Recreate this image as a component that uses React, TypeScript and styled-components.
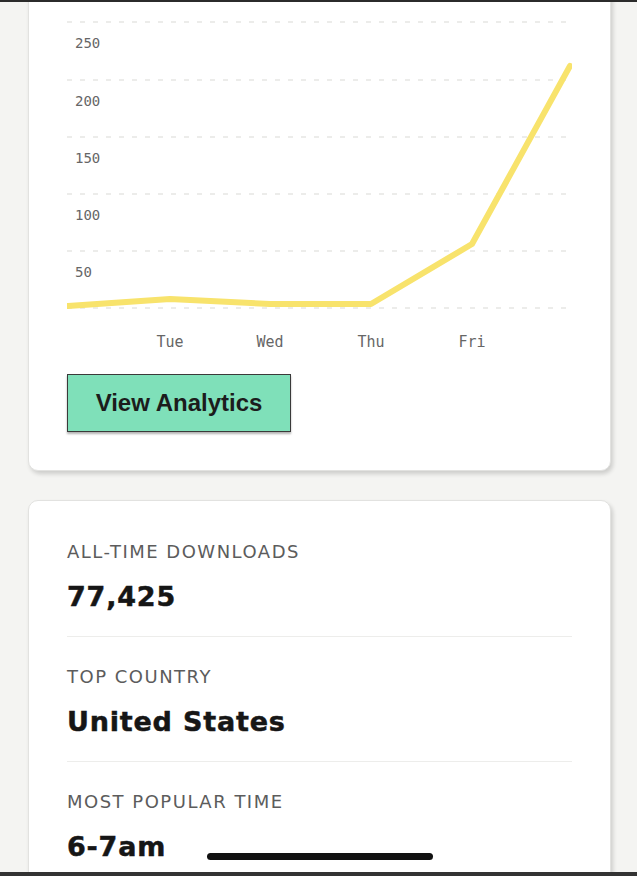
import React from "react"
import styled, { createGlobalStyle } from "styled-components"

const GlobalStyle = createGlobalStyle`
  html, body {
    margin: 0;
    padding: 0;
    background: #f4f4f2;
  }
  * {
    box-sizing: border-box;
  }
`

const Screen = styled.div`
  position: relative;
  width: 637px;
  height: 876px;
  overflow: hidden;
  background: #f4f4f2;
  border-top: 2px solid #2b2b2b;
  border-bottom: 4px solid #333;
  font-family: "Liberation Sans", Arial, sans-serif;
`

const Content = styled.div`
  display: flex;
  flex-direction: column;
  gap: 29px;
  padding: 0 26px 0 28px;
  margin-top: -22px;
`

const Card = styled.section<{ $pad: string }>`
  background: #fff;
  border: 1px solid #e2e2e0;
  border-radius: 10px;
  box-shadow: 2px 3px 4px rgba(0, 0, 0, 0.16);
  padding: ${({ $pad }) => $pad};
`

const ChartSvg = styled.svg`
  display: block;
  width: 505px;
  height: 356px;
`

const Button = styled.button`
  margin-top: 18px;
  width: 224px;
  height: 58px;
  background: #7fe0b9;
  border: 1px solid #3a3a3a;
  box-shadow: 0 2px 2px rgba(0, 0, 0, 0.3);
  color: #1c1c1c;
  font-family: "Liberation Sans", Arial, sans-serif;
  font-weight: 700;
  font-size: 24px;
  cursor: pointer;
`

const Stat = styled.div`
  padding: 29px 0 23px;
  border-bottom: 1px solid #ededeb;

  &:last-child {
    border-bottom: none;
  }
`

const StatLabel = styled.div`
  font-family: "DejaVu Sans", sans-serif;
  font-size: 18px;
  line-height: 22px;
  letter-spacing: 1.5px;
  color: #5c5c5c;
  text-transform: uppercase;
`

const StatValue = styled.div`
  margin-top: 18px;
  font-family: "DejaVu Sans", sans-serif;
  font-weight: 700;
  font-size: 27px;
  line-height: 32px;
  letter-spacing: 0.8px;
  color: #161616;
  -webkit-text-stroke: 0.5px #161616;
`

const HomeIndicator = styled.div`
  position: absolute;
  left: 207px;
  top: 851px;
  width: 226px;
  height: 7px;
  border-radius: 4px;
  background: #111;
`

const gridY = [22, 80, 137, 194, 251, 308]
const yLabels = ["250", "200", "150", "100", "50"]
const days = [
  { label: "Tue", x: 103 },
  { label: "Wed", x: 203 },
  { label: "Thu", x: 304 },
  { label: "Fri", x: 405 },
]
const points = [
  [1, 306],
  [103, 299],
  [203, 304],
  [304, 304],
  [405, 244],
  [503, 66],
]

function Chart() {
  return (
    <ChartSvg viewBox="0 0 505 356">
      {gridY.map((y) => (
        <line
          key={y}
          x1={0}
          x2={505}
          y1={y}
          y2={y}
          stroke="#e6e6e4"
          strokeWidth={1.5}
          strokeDasharray="5 8"
        />
      ))}
      {yLabels.map((l, i) => (
        <text
          key={l}
          x={8}
          y={gridY[i] + 26}
          fontFamily="'DejaVu Sans Mono', monospace"
          fontSize={14}
          fill="#666"
        >
          {l}
        </text>
      ))}
      <polyline
        points={points.map((p) => p.join(",")).join(" ")}
        fill="none"
        stroke="#f8e36c"
        strokeWidth={6}
        strokeLinecap="round"
        strokeLinejoin="round"
      />
      {days.map((d) => (
        <text
          key={d.label}
          x={d.x}
          y={347}
          textAnchor="middle"
          fontFamily="'DejaVu Sans Mono', monospace"
          fontSize={15}
          fill="#666"
        >
          {d.label}
        </text>
      ))}
    </ChartSvg>
  )
}

const stats = [
  { label: "All-time downloads", value: "77,425" },
  { label: "Top country", value: "United States" },
  { label: "Most popular time", value: "6-7am" },
]

export default function App() {
  return (
    <>
      <GlobalStyle />
      <Screen>
        <Content>
          <Card $pad="19px 38px 38px">
            <Chart />
            <Button>View Analytics</Button>
          </Card>
          <Card $pad="11px 38px 0">
            {stats.map((s) => (
              <Stat key={s.label}>
                <StatLabel>{s.label}</StatLabel>
                <StatValue>{s.value}</StatValue>
              </Stat>
            ))}
          </Card>
        </Content>
        <HomeIndicator />
      </Screen>
    </>
  )
}
